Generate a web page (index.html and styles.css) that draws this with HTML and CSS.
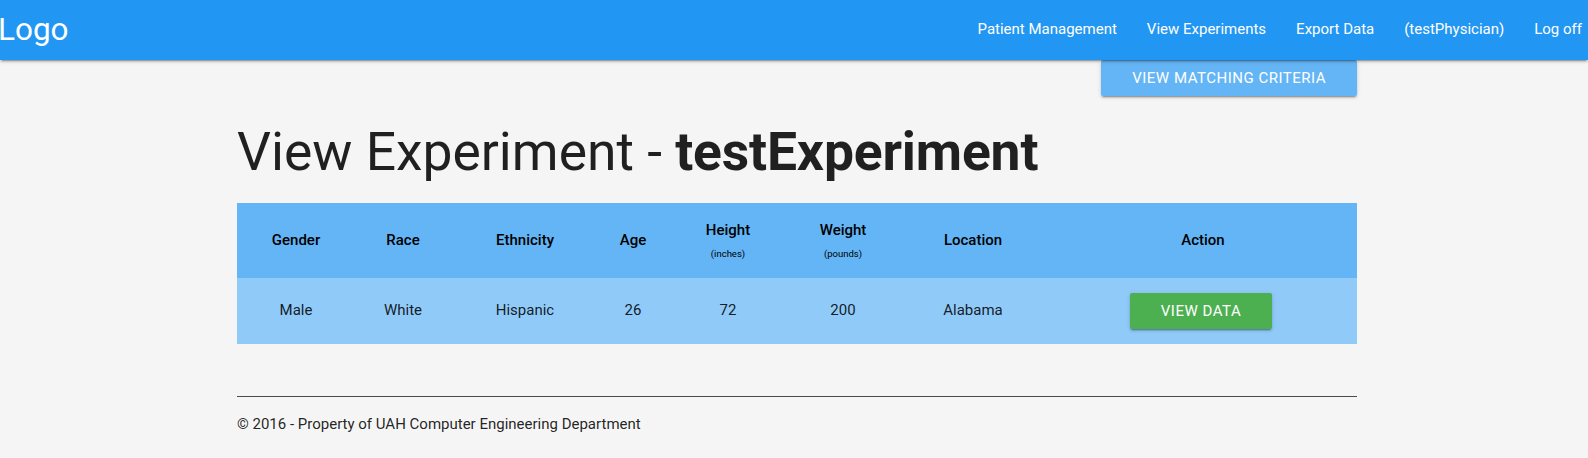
FILE: index.html
```html
<!DOCTYPE html>
<html lang="en">
<head>
<meta charset="utf-8">
<title>View Experiment</title>
<link rel="stylesheet" href="styles.css">
</head>
<body>
<nav class="nav">
  <a class="brand-logo" href="#">Logo</a>
  <ul class="nav-links">
    <li><a href="#">Patient Management</a></li>
    <li><a href="#">View Experiments</a></li>
    <li><a href="#">Export Data</a></li>
    <li><a href="#">(testPhysician)</a></li>
    <li><a href="#">Log off</a></li>
  </ul>
</nav>
<main class="container">
  <div class="toolbar">
    <a class="btn btn-blue" href="#">View Matching Criteria</a>
  </div>
  <h2 class="title">View Experiment - <strong>testExperiment</strong></h2>
  <table class="exp-table">
    <colgroup>
      <col class="c-gender">
      <col class="c-race">
      <col class="c-eth">
      <col class="c-age">
      <col class="c-height">
      <col class="c-weight">
      <col class="c-loc">
      <col class="c-action">
    </colgroup>
    <thead>
      <tr>
        <th>Gender</th>
        <th>Race</th>
        <th>Ethnicity</th>
        <th>Age</th>
        <th><span class="th-main">Height</span><small class="th-unit">(inches)</small></th>
        <th><span class="th-main">Weight</span><small class="th-unit">(pounds)</small></th>
        <th>Location</th>
        <th>Action</th>
      </tr>
    </thead>
    <tbody>
      <tr>
        <td>Male</td>
        <td>White</td>
        <td>Hispanic</td>
        <td>26</td>
        <td>72</td>
        <td>200</td>
        <td>Alabama</td>
        <td class="action-cell"><a class="btn btn-green" href="#">View Data</a></td>
      </tr>
    </tbody>
  </table>
  <footer class="footer">
    <hr class="footer-rule">
    <p class="footer-text">&copy; 2016 - Property of UAH Computer Engineering Department</p>
  </footer>
</main>
</body>
</html>
```
FILE: styles.css
```css
html, body {
  margin: 0;
  padding: 0;
}

body {
  background: #f5f5f5;
  font-family: Roboto, "Liberation Sans", Arial, sans-serif;
  font-size: 15px;
  line-height: 1.5;
  color: rgba(0, 0, 0, 0.87);
  overflow: hidden;
}

a {
  text-decoration: none;
}

/* ---------- Navigation ---------- */
.nav {
  height: 60px;
  background: #2196f3;
  display: flex;
  align-items: stretch;
  justify-content: space-between;
  box-shadow: 0 2px 2px 0 rgba(0, 0, 0, 0.14), 0 1px 5px 0 rgba(0, 0, 0, 0.12), 0 3px 1px -2px rgba(0, 0, 0, 0.2);
  position: relative;
  z-index: 2;
}

.brand-logo {
  color: #fff;
  font-size: 31.5px;
  line-height: 60px;
  margin-left: -2px;
}

.nav-links {
  list-style: none;
  margin: 0 -9px 0 0;
  padding: 0;
  display: flex;
}

.nav-links a {
  display: block;
  padding: 0 15px;
  color: #fff;
  font-size: 15px;
  line-height: 58px;
}

/* ---------- Container ---------- */
.container {
  width: 1120px;
  margin-left: 237px;
}

.toolbar {
  display: flex;
  justify-content: flex-end;
}

/* ---------- Buttons ---------- */
.btn {
  display: inline-block;
  height: 36px;
  line-height: 36px;
  padding: 0 30px;
  border-radius: 2px;
  color: #fff;
  font-size: 15px;
  text-transform: uppercase;
  letter-spacing: 0.5px;
  box-shadow: 0 2px 2px 0 rgba(0, 0, 0, 0.14), 0 1px 5px 0 rgba(0, 0, 0, 0.12), 0 3px 1px -2px rgba(0, 0, 0, 0.2);
}

.btn-blue {
  background: #64b5f6;
  padding: 0 31px;
}

.btn-green {
  background: #4caf50;
  padding: 0 31px;
}

/* ---------- Title ---------- */
.title {
  font-size: 53.4px;
  font-weight: 400;
  line-height: 110%;
  margin: 27px 0 21px;
  color: rgba(0, 0, 0, 0.87);
}

.title strong {
  font-weight: 700;
  letter-spacing: -0.15px;
}

/* ---------- Table ---------- */
.exp-table {
  width: 1120px;
  border-collapse: collapse;
  table-layout: fixed;
}

.c-gender { width: 118px; }
.c-race { width: 96px; }
.c-eth { width: 148px; }
.c-age { width: 68px; }
.c-height { width: 122px; }
.c-weight { width: 108px; }
.c-loc { width: 152px; }
.c-action { width: 308px; }

.exp-table thead tr {
  background: #64b5f6;
  height: 75px;
}

.exp-table tbody tr {
  background: #90caf9;
  height: 66px;
}

.exp-table th,
.exp-table td {
  padding: 15px 5px;
  text-align: center;
  vertical-align: middle;
}

.exp-table .action-cell {
  padding-right: 9px;
}

.exp-table th {
  font-size: 15px;
  font-weight: 500;
  color: #000;
}

.exp-table td {
  font-size: 15px;
  font-weight: 400;
  color: rgba(0, 0, 0, 0.87);
}

.th-main {
  display: block;
  line-height: 22px;
}

.th-unit {
  display: block;
  font-size: 9.5px;
  font-weight: 400;
  line-height: 16px;
  margin-top: 5px;
}

/* ---------- Footer ---------- */
.footer-rule {
  margin: 52px 0 0;
  border: 0;
  border-top: 1px solid #4a4a4a;
  height: 0;
}

.footer-text {
  margin: 16px 0 0;
  font-size: 15px;
  line-height: 22.5px;
  color: rgba(0, 0, 0, 0.87);
}
```
